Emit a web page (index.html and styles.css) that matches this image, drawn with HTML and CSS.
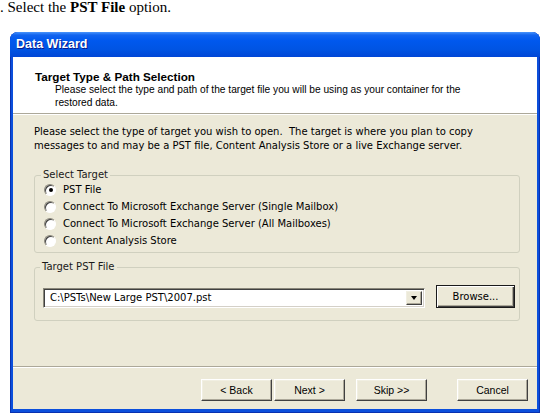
FILE: index.html
```html
<!DOCTYPE html>
<html lang="en">
<head>
    <meta charset="UTF-8">
    <title>Data Wizard</title>
    <link rel="stylesheet" href="styles.css">
</head>
<body>
    <p class="step">. Select the <b>PST File</b> option.</p>

    <!-- Wizard window -->
    <div class="window">
        <div class="titlebar">Data Wizard</div>
        <div class="client">
            <div class="header">
                <div class="header-title">Target Type &amp; Path Selection</div>
                <div class="header-sub">Please select the type and path of the target file you will be using as your container for the<br>restored data.</div>
            </div>

            <div class="content">
                <p class="intro">Please select the type of target you wish to open.&nbsp; The target is where you plan to copy<br>messages to and may be a PST file, Content Analysis Store or a live Exchange server.</p>

                <fieldset class="group targets">
                    <legend>Select Target</legend>
                    <label class="radio"><span class="dot checked"></span>PST File</label>
                    <label class="radio"><span class="dot"></span>Connect To Microsoft Exchange Server (Single Mailbox)</label>
                    <label class="radio"><span class="dot"></span>Connect To Microsoft Exchange Server (All Mailboxes)</label>
                    <label class="radio"><span class="dot"></span>Content Analysis Store</label>
                </fieldset>

                <fieldset class="group path">
                    <legend>Target PST File</legend>
                    <div class="path-row">
                        <div class="combo">
                            <span class="combo-text">C:\PSTs\New Large PST\2007.pst</span>
                            <span class="combo-btn"><span class="arrow"></span></span>
                        </div>
                        <button class="btn browse">Browse...</button>
                    </div>
                </fieldset>
            </div>

            <div class="footer">
                <button class="btn back">&lt; Back</button>
                <button class="btn next">Next &gt;</button>
                <button class="btn skip">Skip &gt;&gt;</button>
                <button class="btn cancel">Cancel</button>
            </div>
        </div>
    </div>
</body>
</html>
```

FILE: styles.css
```css
body {
    margin: 0;
    padding: 0;
    background-color: #ffffff;
    font-family: "Liberation Serif", serif;
    overflow: hidden;
}

.step {
    margin: 0;
    font-size: 15px;
    line-height: 14px;
    color: #000;
}

.window {
    margin: 18px 0 0 10px;
    width: 530px;
    height: 381px;
    box-sizing: border-box;
    padding: 0 3px 4px 3px;
    background-color: #0b4fdc;
    border-radius: 8px 8px 0 0;
    box-shadow: inset 1px 0 #0831b0, inset -1px 0 #0831b0, inset 0 -1px #0831b0;
    display: flex;
    flex-direction: column;
}

.titlebar {
    height: 25px;
    margin: 0 -3px;
    padding-left: 6px;
    border-radius: 8px 8px 0 0;
    background: linear-gradient(#4a95fb 0, #1264ef 3px, #0058ee 35%, #0054e3 70%, #0146d6 100%);
    color: #ffffff;
    font-family: "Liberation Sans", sans-serif;
    font-weight: bold;
    font-size: 12.5px;
    line-height: 25px;
    text-shadow: 1px 1px #0a1a8a;
}

.client {
    flex: 1;
    background-color: #ece9d8;
    display: flex;
    flex-direction: column;
}

.header {
    height: 57px;
    box-sizing: border-box;
    padding: 13px 0 0 22px;
    background-color: #ffffff;
    border-bottom: 1px solid #aca899;
    box-shadow: 0 1px #ffffff;
    font-family: "Liberation Sans", sans-serif;
    color: #000;
}

.header-title {
    font-weight: bold;
    font-size: 11.7px;
    line-height: 13px;
}

.header-sub {
    padding-left: 20px;
    font-size: 10.2px;
    line-height: 13px;
    white-space: nowrap;
}

.content {
    padding: 0 17px 0 21px;
    font-family: "DejaVu Sans", sans-serif;
    font-size: 10px;
    color: #000;
}

.intro {
    margin: 11px 0 16px 0;
    line-height: 14px;
    white-space: nowrap;
}

.group {
    margin: 0;
    padding: 0 4px 3px 9px;
    border: 1px solid #d0d0bf;
    border-radius: 3px;
}

.group legend {
    padding: 0 2px;
    margin-left: -3px;
    line-height: 12px;
    color: #1a1a1a;
}

.radio {
    display: flex;
    align-items: center;
    height: 17px;
    white-space: nowrap;
}

.dot {
    width: 10px;
    height: 10px;
    margin-right: 7px;
    border-radius: 50%;
    background-color: #ffffff;
    border: 1px solid;
    border-color: #8a877a #ffffff #ffffff #8a877a;
    box-shadow: inset 1px 1px #404040;
    display: flex;
    align-items: center;
    justify-content: center;
}

.dot.checked::after {
    content: "";
    width: 4px;
    height: 4px;
    margin: 1px 0 0 1px;
    border-radius: 50%;
    background-color: #000;
}

.path {
    margin-top: 8px;
    padding: 12px 4px 12px 8px;
}

.path-row {
    display: flex;
    align-items: flex-end;
}

.combo {
    width: 382px;
    height: 20px;
    box-sizing: border-box;
    display: flex;
    align-items: stretch;
    background-color: #ffffff;
    border: 1px solid;
    border-color: #8a877a #ffffff #ffffff #8a877a;
    box-shadow: inset 1px 1px #404040, inset -1px -1px #d4d0c8;
    padding: 2px;
}

.combo-text {
    flex: 1;
    padding-left: 4px;
    line-height: 14px;
}

.combo-btn {
    width: 16px;
    box-sizing: border-box;
    background-color: #ece9d8;
    border: 1px solid;
    border-color: #f1efe2 #404040 #404040 #f1efe2;
    box-shadow: inset -1px -1px #aca899;
    display: flex;
    align-items: center;
    justify-content: center;
}

.arrow {
    width: 0;
    height: 0;
    border-left: 3.5px solid transparent;
    border-right: 3.5px solid transparent;
    border-top: 4px solid #000;
}

.btn {
    width: 71px;
    height: 22px;
    padding: 0;
    background-color: #ece9d8;
    border: 1px solid;
    border-color: #ffffff #404040 #404040 #ffffff;
    box-shadow: inset -1px -1px #aca899, inset 1px 1px #f1efe2;
    font-family: "Liberation Sans", sans-serif;
    font-size: 10.5px;
    color: #000;
}

.browse {
    width: 79px;
    height: 23px;
    margin-left: 11px;
    border-color: #1a1a1a;
    box-shadow: inset 1px 1px #ffffff, inset -1px -1px #404040, inset -2px -2px #aca899;
    font-family: "DejaVu Sans", sans-serif;
    font-size: 10px;
}

.footer {
    margin-top: auto;
    height: 43px;
    box-sizing: border-box;
    padding: 12px 9px 0 0;
    border-top: 1px solid #aca899;
    box-shadow: inset 0 1px #ffffff;
    display: flex;
    justify-content: flex-end;
    align-items: flex-start;
}

.next {
    margin-left: 2px;
}

.skip {
    margin-left: 11px;
}

.cancel {
    margin-left: 30px;
}
```
